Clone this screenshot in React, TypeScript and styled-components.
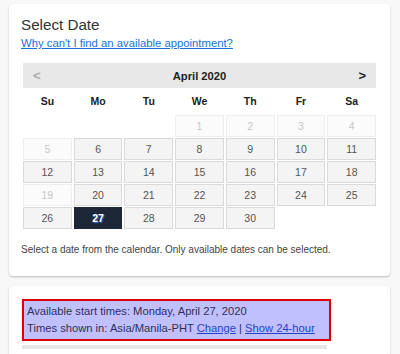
import React from "react";
import styled, { createGlobalStyle } from "styled-components";

interface Day {
  n: number;
  disabled?: boolean;
  selected?: boolean;
}

const GlobalStyle = createGlobalStyle`
  body {
    margin: 0;
    background: #f8f8f8;
    font-family: "Liberation Sans", Arial, sans-serif;
  }
`;

const weekdays = ["Su", "Mo", "Tu", "We", "Th", "Fr", "Sa"];

const buildDays = (): (Day | null)[] => {
  const days: (Day | null)[] = [null, null, null];
  for (let n = 1; n <= 30; n++) {
    days.push({ n, disabled: n <= 5 || n === 19, selected: n === 27 });
  }
  return days;
};

const App: React.FC = () => {
  const days = buildDays();
  return (
    <Page>
      <GlobalStyle />
      <Card>
        <Title>Select Date</Title>
        <HelpLink href="#">Why can't I find an available appointment?</HelpLink>
        <Calendar>
          <MonthBar>
            <NavButton $muted>&lt;</NavButton>
            <Month>April 2020</Month>
            <NavButton>&gt;</NavButton>
          </MonthBar>
          <Grid>
            {weekdays.map((w) => (
              <Weekday key={w}>{w}</Weekday>
            ))}
            {days.map((d, i) =>
              d ? (
                <DayCell key={i} $disabled={d.disabled} $selected={d.selected}>
                  {d.n}
                </DayCell>
              ) : (
                <span key={i} />
              )
            )}
          </Grid>
        </Calendar>
        <Hint>Select a date from the calendar. Only available dates can be selected.</Hint>
      </Card>
      <Card $tight>
        <TimesBox>
          <div>Available start times: Monday, April 27, 2020</div>
          <div>
            Times shown in: Asia/Manila-PHT <TimeLink href="#">Change</TimeLink> |{" "}
            <TimeLink href="#">Show 24-hour</TimeLink>
          </div>
        </TimesBox>
        <Divider />
      </Card>
    </Page>
  );
};

const Page = styled.div`
  display: flex;
  flex-direction: column;
  gap: 10px;
  padding: 4px 10px 0 9px;
  width: 381px;
`;

const Card = styled.div<{ $tight?: boolean }>`
  background: #fff;
  border-radius: 4px;
  box-shadow: 0 1px 2px rgba(0, 0, 0, 0.25);
  padding: ${(p) => (p.$tight ? "13px 13px 8px" : "10px 14px 20px 12px")};
`;

const Title = styled.h2`
  margin: 0;
  font-size: 15.2px;
  font-weight: normal;
  color: #333;
  line-height: 22px;
`;

const HelpLink = styled.a`
  display: block;
  font-size: 11.3px;
  color: #1a6fd6;
  text-decoration: underline;
  line-height: 15px;
`;

const Calendar = styled.div`
  margin: 12px 0 0 2px;
`;

const MonthBar = styled.div`
  display: flex;
  align-items: center;
  justify-content: space-between;
  height: 25px;
  background: #e8e8e8;
  padding: 0 10px;
`;

const NavButton = styled.span<{ $muted?: boolean }>`
  font-size: 13px;
  font-weight: bold;
  color: ${(p) => (p.$muted ? "#aaa" : "#222")};
`;

const Month = styled.span`
  font-size: 11.2px;
  font-weight: bold;
  color: #222;
`;

const Grid = styled.div`
  display: grid;
  grid-template-columns: repeat(7, 1fr);
  column-gap: 2px;
  row-gap: 1px;
`;

const Weekday = styled.div`
  font-size: 10.5px;
  font-weight: bold;
  color: #222;
  text-align: center;
  line-height: 26px;
`;

const DayCell = styled.div<{ $disabled?: boolean; $selected?: boolean }>`
  height: 20px;
  display: flex;
  align-items: center;
  justify-content: center;
  font-size: 10.5px;
  border: 1px solid ${(p) => (p.$selected ? "#1d2738" : p.$disabled ? "#eeeeee" : "#dadada")};
  background: ${(p) => (p.$selected ? "#1d2738" : p.$disabled ? "#fbfbfb" : "#f4f4f4")};
  color: ${(p) => (p.$selected ? "#fff" : p.$disabled ? "#c8c8c8" : "#555")};
  font-weight: ${(p) => (p.$selected ? "bold" : "normal")};
  text-shadow: ${(p) => (p.$selected ? "1px 1px 1px #3a6fd0" : "none")};
`;

const Hint = styled.p`
  margin: 14px 0 0;
  font-size: 10px;
  line-height: 13px;
  color: #444;
`;

const TimesBox = styled.div`
  width: 300px;
  background: #c0c0ff;
  border: 2px solid #e00000;
  padding: 2px 2px 2px 3px;
  font-size: 11.2px;
  line-height: 17px;
  color: #2f2f55;
`;

const TimeLink = styled.a`
  color: #2342c8;
  text-decoration: underline;
`;

const Divider = styled.div`
  margin-top: 4px;
  width: 305px;
  height: 4px;
  background: #e6e6e6;
`;

export default App;
